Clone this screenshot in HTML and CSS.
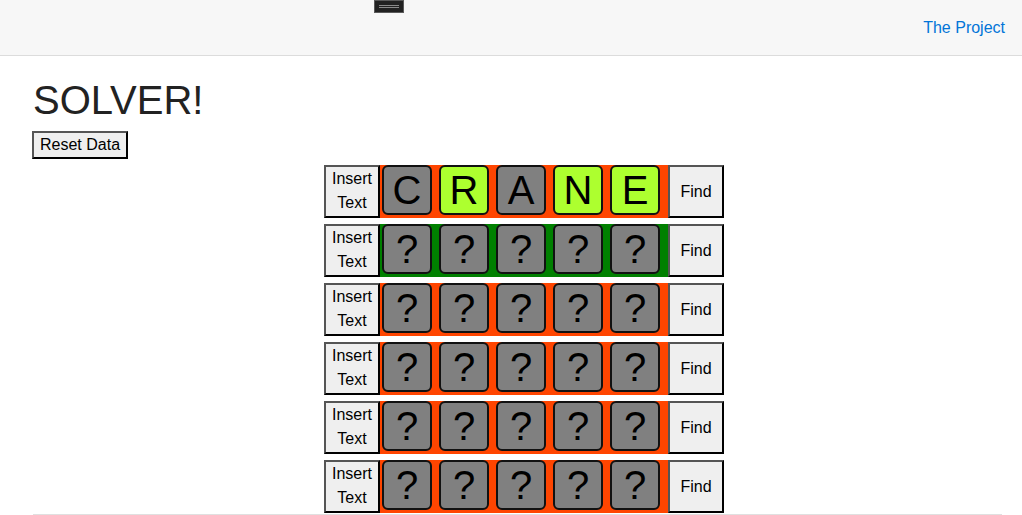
FILE: index.html
```html
<!DOCTYPE html>
<html>
<head>
<meta charset="utf-8">
<title>Solver</title>
<link rel="stylesheet" href="styles.css">
</head>
<body>
<nav class="navbar">
  <button class="toggler" aria-label="Toggle navigation"><span class="bar"></span><span class="bar"></span></button>
  <a class="nav-link" href="#">The Project</a>
</nav>
<main class="container">
  <h1 class="title">SOLVER!</h1>
  <button class="btn reset">Reset Data</button>
  <div class="board">
    <div class="row">
      <button class="btn side insert">Insert<br>Text</button>
      <div class="tiles orange">
        <div class="tile">C</div>
        <div class="tile lime">R</div>
        <div class="tile">A</div>
        <div class="tile lime">N</div>
        <div class="tile lime">E</div>
      </div>
      <button class="btn side">Find</button>
    </div>
    <div class="row">
      <button class="btn side insert">Insert<br>Text</button>
      <div class="tiles green">
        <div class="tile">?</div><div class="tile">?</div><div class="tile">?</div><div class="tile">?</div><div class="tile">?</div>
      </div>
      <button class="btn side">Find</button>
    </div>
    <div class="row">
      <button class="btn side insert">Insert<br>Text</button>
      <div class="tiles orange">
        <div class="tile">?</div><div class="tile">?</div><div class="tile">?</div><div class="tile">?</div><div class="tile">?</div>
      </div>
      <button class="btn side">Find</button>
    </div>
    <div class="row">
      <button class="btn side insert">Insert<br>Text</button>
      <div class="tiles orange">
        <div class="tile">?</div><div class="tile">?</div><div class="tile">?</div><div class="tile">?</div><div class="tile">?</div>
      </div>
      <button class="btn side">Find</button>
    </div>
    <div class="row">
      <button class="btn side insert">Insert<br>Text</button>
      <div class="tiles orange">
        <div class="tile">?</div><div class="tile">?</div><div class="tile">?</div><div class="tile">?</div><div class="tile">?</div>
      </div>
      <button class="btn side">Find</button>
    </div>
    <div class="row">
      <button class="btn side insert">Insert<br>Text</button>
      <div class="tiles orange">
        <div class="tile">?</div><div class="tile">?</div><div class="tile">?</div><div class="tile">?</div><div class="tile">?</div>
      </div>
      <button class="btn side">Find</button>
    </div>
  </div>
  <hr class="rule">
</main>
</body>
</html>
```
FILE: styles.css
```css
* { box-sizing: border-box; }
html, body { margin: 0; padding: 0; }
body {
  font-family: "Liberation Sans", Arial, sans-serif;
  color: #212529;
  background: #fff;
  overflow: hidden;
}
.navbar {
  position: relative;
  height: 56px;
  background: #f7f7f7;
  border-bottom: 1px solid #dcdcdc;
  display: flex;
  align-items: center;
  justify-content: flex-end;
  padding-right: 17px;
}
.toggler {
  position: absolute;
  left: 374px;
  top: 0;
  width: 30px;
  height: 13px;
  background: #222;
  border: 1px solid #5a5a5a;
  padding: 0;
  display: flex;
  flex-direction: column;
  align-items: center;
  justify-content: center;
  gap: 1px;
}
.toggler .bar {
  display: block;
  width: 20px;
  height: 1px;
  background: #8a8a8a;
}
.nav-link {
  color: #0275d8;
  text-decoration: none;
  font-size: 16px;
  margin-top: 1px;
}
.container {
  padding: 0 20px 0 33px;
}
.title {
  margin: 20px 0 7px 0;
  font-size: 40px;
  font-weight: 400;
  line-height: 48px;
  color: #222;
}
.btn {
  font-family: "Liberation Sans", Arial, sans-serif;
  font-size: 16px;
  color: #000;
  background: #efefef;
  border: 2px solid;
  border-color: #555 #000 #000 #555;
  border-radius: 0;
}
.reset {
  display: block;
  height: 28px;
  padding: 0 6px;
  line-height: 20px;
  margin-left: -1px;
}
.board {
  margin: 6px 0 0 291px;
  display: flex;
  flex-direction: column;
  gap: 6px;
  width: 400px;
}
.row {
  display: flex;
  height: 53px;
}
.side {
  width: 56px;
  height: 53px;
  padding: 0;
  line-height: 24px;
  flex: none;
}
.insert { padding-bottom: 1px; }
.tiles {
  width: 288px;
  display: flex;
  align-items: flex-start;
  gap: 7px;
  padding-left: 2px;
}
.orange { background: #ff4500; }
.green { background: #008000; }
.tile {
  width: 50px;
  height: 50px;
  flex: none;
  background: #808080;
  border: 2px solid #111;
  border-radius: 6px;
  display: flex;
  align-items: center;
  justify-content: center;
  font-size: 40px;
  color: #000;
  padding-top: 1px;
}
.tile.lime { background: #adff2f; }
.rule {
  margin: 1px 0 0 0;
  border: 0;
  border-top: 1px solid #e0e0e0;
}
```
